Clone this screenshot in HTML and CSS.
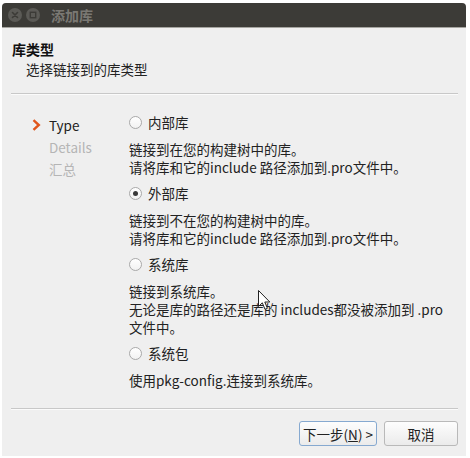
FILE: index.html
```html
<!DOCTYPE html>
<html>
<head>
<meta charset="utf-8">
<link rel="stylesheet" href="styles.css">
</head>
<body>
<div class="window">
  <div class="titlebar">
    <span class="tbtn"><svg width="14" height="14" viewBox="0 0 14 14"><circle cx="7" cy="7" r="7" fill="#5b5a56"/><path d="M4.5 4.5L9.5 9.5M9.5 4.5L4.5 9.5" stroke="#3c3b37" stroke-width="1.6" stroke-linecap="round"/></svg></span>
    <span class="tbtn"><svg width="14" height="14" viewBox="0 0 14 14"><circle cx="7" cy="7" r="7" fill="#5b5a56"/><rect x="4.3" y="4.3" width="5.4" height="5.4" fill="none" stroke="#3c3b37" stroke-width="1.4"/></svg></span>
    <span class="title">添加库</span>
  </div>
  <div class="body">
    <div class="header">
      <div class="h-title">库类型</div>
      <div class="h-sub">选择链接到的库类型</div>
    </div>
    <div class="sep"></div>
    <div class="main">
      <ul class="nav">
        <li class="cur"><svg class="chev" width="9" height="12" viewBox="0 0 9 12"><path d="M1.5 1.2L6.8 6L1.5 10.8" fill="none" stroke="#e0561c" stroke-width="2.4"/></svg>Type</li>
        <li class="todo">Details</li>
        <li class="todo">汇总</li>
      </ul>
      <div class="options">
        <div class="opt">
          <div class="radio-row"><span class="radio"></span>内部库</div>
          <p class="desc">链接到在您的构建树中的库。<br>请将库和它的include 路径添加到.pro文件中。</p>
        </div>
        <div class="opt">
          <div class="radio-row"><span class="radio checked"></span>外部库</div>
          <p class="desc">链接到不在您的构建树中的库。<br>请将库和它的include 路径添加到.pro文件中。</p>
        </div>
        <div class="opt">
          <div class="radio-row"><span class="radio"></span>系统库</div>
          <p class="desc">链接到系统库。<br>无论是库的路径还是库的 includes都没被添加到 .pro<br>文件中。</p>
        </div>
        <div class="opt">
          <div class="radio-row"><span class="radio"></span>系统包</div>
          <p class="desc">使用pkg-config.连接到系统库。</p>
        </div>
      </div>
    </div>
    <div class="sep foot-sep"></div>
    <div class="buttons">
      <button class="btn btn-default">下一步(<u>N</u>) &gt;</button>
      <button class="btn btn-cancel">取消</button>
    </div>
  </div>
</div>
<svg class="cursor" width="13" height="21" viewBox="0 0 13 21"><path d="M0.5 0.5L0.5 16.5L4.3 12.8L7 19.3L9.4 18.3L6.8 12L11.8 12Z" fill="#ffffff" stroke="#222" stroke-width="1"/></svg>
</body>
</html>
```
FILE: styles.css
```css
html, body {
  margin: 0;
  padding: 0;
  background: #ffffff;
}
body {
  font-family: "Noto Sans CJK SC", "Noto Sans", sans-serif;
  font-size: 13.5px;
  color: #333333;
}
.window {
  position: relative;
  margin: 3px 0 0 2px;
  width: 464px;
  height: 453px;
  display: flex;
  flex-direction: column;
  background: #efefef;
  border-radius: 4px 4px 0 0;
  overflow: hidden;
}
.titlebar {
  height: 24px;
  flex: none;
  background: #3c3b37;
  border-bottom: 1px solid #a6a5a0;
  display: flex;
  align-items: center;
  padding-left: 6px;
}
.tbtn {
  display: flex;
  flex: none;
  width: 14px;
  height: 14px;
  margin-right: 4px;
}
.title {
  margin-left: 7px;
  font-weight: bold;
  font-size: 14px;
  color: #7a7873;
}
.body {
  flex: 1;
  display: flex;
  flex-direction: column;
}
.header {
  padding: 12px 0 0 10px;
  line-height: 18px;
}
.h-title {
  font-weight: bold;
  color: #111;
  font-size: 14px;
}
.h-sub {
  margin-top: 2px;
  padding-left: 14px;
  color: #222;
}
.sep {
  margin: 15px 8px 0 9px;
  height: 0;
  border-top: 1px solid #c8c8c8;
  border-bottom: 1px solid #fbfbfb;
}
.main {
  flex: 1;
  display: flex;
}
.nav {
  list-style: none;
  margin: 0;
  padding: 19px 0 0 30px;
  width: 127px;
  box-sizing: border-box;
  line-height: 22px;
}
.nav li {
  padding-left: 17px;
}
.nav li.cur {
  padding-left: 0;
  display: flex;
  align-items: center;
  color: #222;
}
.chev {
  margin-right: 8px;
}
.nav li.todo {
  color: #b5b5b5;
}
.options {
  padding-top: 17px;
  color: #222;
}
.radio-row {
  height: 20px;
  display: flex;
  align-items: center;
}
.radio {
  width: 13px;
  height: 13px;
  box-sizing: border-box;
  border-radius: 50%;
  border: 1px solid #a9a9a9;
  background: linear-gradient(#ffffff, #f2f2f2);
  margin-right: 6px;
  display: flex;
  align-items: center;
  justify-content: center;
}
.radio.checked::after {
  content: "";
  width: 5px;
  height: 5px;
  border-radius: 50%;
  background: #3a3a3a;
}
.desc {
  margin: 8px 0 7px;
  line-height: 18px;
  white-space: nowrap;
}
.foot-sep {
  margin-top: 0;
}
.buttons {
  flex: none;
  display: flex;
  justify-content: flex-end;
  gap: 7px;
  padding: 11px 8px 10px 0;
}
.btn {
  height: 25px;
  box-sizing: border-box;
  border: 1px solid #b9b9b9;
  border-radius: 3px;
  background: linear-gradient(#fdfdfd, #ebebeb);
  font-family: inherit;
  font-size: 13.5px;
  color: #222;
  padding: 0;
}
.btn-default {
  width: 78px;
  border-color: #86a9d0;
}
.btn-cancel {
  width: 74px;
}
.cursor {
  position: absolute;
  left: 258px;
  top: 290px;
}
```
